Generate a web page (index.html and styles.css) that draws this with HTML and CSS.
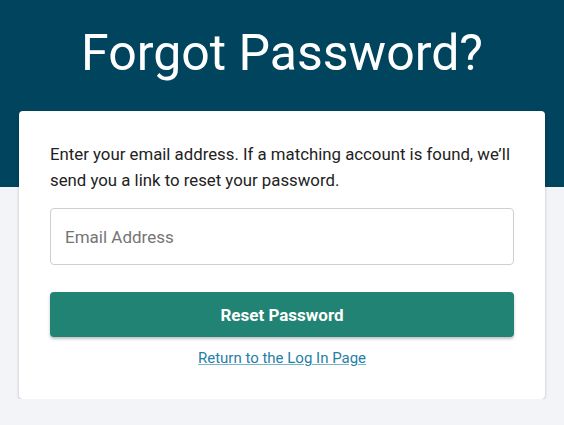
FILE: index.html
```html
<!DOCTYPE html>
<html lang="en">
<head>
    <meta charset="UTF-8">
    <meta name="viewport" content="width=device-width, initial-scale=1.0">
    <title>Forgot Password</title>
    <link rel="stylesheet" href="styles.css">
</head>
<body>
    <div class="hero">
        <h1 class="title">Forgot Password?</h1>
    </div>

    <div class="card">
        <p class="intro">Enter your email address. If a matching account is found, we’ll send you a link to reset your password.</p>

        <form class="reset-form">
            <input type="email" class="text-input" placeholder="Email Address">
            <button type="button" class="primary-button">Reset Password</button>
        </form>

        <div class="back-link-row">
            <a href="#" class="back-link">Return to the Log In Page</a>
        </div>
    </div>
</body>
</html>
```

FILE: styles.css
```css
body {
    margin: 0;
    padding: 0;
    background: #f3f4f8;
    color: #222;
    font-family: Roboto, "Liberation Sans", sans-serif;
}

.hero {
    background: #01445e;
    height: 187px;
    padding-top: 23px;
    box-sizing: border-box;
}

.title {
    margin: 0;
    color: white;
    font-size: 50px;
    font-weight: 400;
    line-height: 60px;
    text-align: center;
}

.card {
    margin: -76px 19px 0;
    padding: 30px 31px 31px;
    background: white;
    border-radius: 4px;
    box-shadow: 0 1px 3px rgba(0, 0, 0, 0.25);
}

.intro {
    margin: 0 0 15px;
    font-size: 16.8px;
    line-height: 26px;
    color: #222;
}

.reset-form {
    display: flex;
    flex-direction: column;
    gap: 27px;
}

.text-input {
    height: 57px;
    box-sizing: border-box;
    padding: 0 14px;
    border: 1px solid #cfcfd3;
    border-radius: 4px;
    font-family: inherit;
    font-size: 17px;
    color: #222;
    background: white;
}

.text-input::placeholder {
    color: #757575;
}

.primary-button {
    height: 45px;
    border: none;
    border-radius: 4px;
    background: #218373;
    color: white;
    font-family: inherit;
    font-size: 17px;
    font-weight: 700;
    cursor: pointer;
    box-shadow: 0 2px 3px rgba(0, 0, 0, 0.25);
}

.back-link-row {
    margin-top: 11px;
    text-align: center;
    line-height: 20px;
}

.back-link {
    color: #1f80a8;
    font-size: 15px;
    text-decoration: underline;
    text-decoration-color: rgba(31, 128, 168, 0.6);
}
```
